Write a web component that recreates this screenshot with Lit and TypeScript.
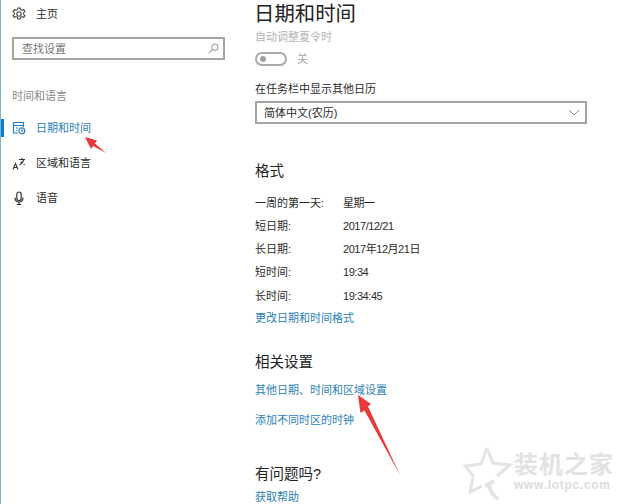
import { LitElement, html, css } from "lit";
import { customElement } from "lit/decorators.js";

const rows = [
  ["一周的第一天:", "星期一"],
  ["短日期:", "2017/12/21"],
  ["长日期:", "2017年12月21日"],
  ["短时间:", "19:34"],
  ["长时间:", "19:34:45"],
];

@customElement("app-root")
export class AppRoot extends LitElement {
  static styles = css`
    :host {
      display: block;
      width: 640px;
      height: 504px;
      overflow: hidden;
      position: relative;
      background: #fff;
      color: #2b2b2b;
      font-family: "Liberation Sans", "Noto Sans CJK SC", sans-serif;
      font-size: 11px;
      line-height: 16px;
    }
    .page { display: flex; height: 504px; }
    .side {
      width: 255px;
      flex: none;
      box-sizing: border-box;
      border-left: 1px solid #7fb6c4;
      padding: 6px 0 0 11px;
    }
    .nav { display: flex; align-items: center; gap: 10px; height: 16px; position: relative; }
    .nav svg { width: 14px; height: 14px; flex: none; display: block; }
    .nav.on { color: #2a7fb8; margin-top: 16px; }
    .nav.on::before {
      content: "";
      position: absolute;
      left: -11px;
      top: -1px;
      width: 3px;
      height: 18px;
      background: #0f78d0;
    }
    .nav.second { margin-top: 19px; }
    .nav.third { margin-top: 19px; }
    .search {
      margin-top: 15px;
      width: 213px;
      height: 23px;
      box-sizing: border-box;
      border: 2px solid #a4a4a4;
      display: flex;
      align-items: center;
      justify-content: space-between;
      padding: 0 4px 0 8px;
      color: #777;
    }
    .search svg { width: 11px; height: 11px; }
    .group { margin-top: 28px; color: #8a8a8a; }
    .main { flex: 1; min-width: 0; padding-top: 1px; margin-left: -1px; }
    h1 { margin: 0; font-size: 20.4px; font-weight: 400; line-height: 26px; color: #222; }
    .dim { color: #b4b4b4; margin-top: 2px; height: 16px; padding-left: 1px; }
    .toggle-row { display: flex; align-items: center; gap: 10px; margin: 6px 0 0 1px; color: #aaa; }
    .toggle {
      width: 32px;
      height: 14px;
      box-sizing: border-box;
      border: 2px solid #a8a8a8;
      border-radius: 7px;
      display: flex;
      align-items: center;
      padding-left: 3px;
    }
    .toggle i { width: 6px; height: 6px; border-radius: 50%; background: #a0a0a0; display: block; }
    .body { padding-left: 1px; }
    .label { margin-top: 14px; }
    .select {
      margin-top: 4px;
      width: 332px;
      height: 23px;
      box-sizing: border-box;
      border: 2px solid #a4a4a4;
      display: flex;
      align-items: center;
      justify-content: space-between;
      padding: 0 5px 0 7px;
    }
    .select svg { width: 12px; height: 7px; }
    h2 { margin: 0; font-size: 14.5px; font-weight: 400; line-height: 20px; color: #222; }
    .fmt { margin-top: 37px; }
    .table { margin-top: 10px; display: grid; grid-template-columns: 88px 1fr; grid-auto-rows: 23.25px; align-items: center; }
    .val { letter-spacing: -0.45px; }
    a { color: #2a7fb8; text-decoration: none; display: block; }
    .change { margin-top: 3px; }
    .rel { margin-top: 26px; }
    .l1 { margin-top: 10px; }
    .l2 { margin-top: 14px; }
    .qa { margin-top: 36px; }
    .help { margin-top: 5px; }
    .mark { position: absolute; pointer-events: none; }
    .arrow1 { left: 80px; top: 132px; width: 30px; height: 26px; }
    .arrow2 { left: 350px; top: 390px; width: 54px; height: 88px; }
    .star { left: 463px; top: 445px; width: 50px; height: 56px; }
    .wm { position: absolute; left: 514px; top: 452px; color: #dcdcdc; pointer-events: none; }
    .wm b { display: block; font-size: 24px; line-height: 26px; letter-spacing: 1px; font-weight: 700; color: #e2e2e2; }
    .wm span { display: block; font-size: 12px; line-height: 14px; font-weight: 700; letter-spacing: 0.7px; }
  `;

  render() {
    return html`
      <div class="page">
        <aside class="side">
          <div class="nav">
            <svg viewBox="0 0 14 14" fill="none" stroke="#444" stroke-width="1.1">
              <circle cx="7" cy="7" r="2.2"></circle>
              <path d="M5.8 1h2.4l.4 1.7 1.5.7 1.6-.9 1.2 2-1.3 1.2v1.6l1.3 1.2-1.2 2-1.6-.9-1.5.7-.4 1.7H5.8l-.4-1.7-1.5-.7-1.6.9-1.2-2 1.3-1.2V5.7L1.1 4.5l1.2-2 1.6.9 1.5-.7z"></path>
            </svg>
            <span>主页</span>
          </div>
          <div class="search">
            <span>查找设置</span>
            <svg viewBox="0 0 12 12" fill="none" stroke="#999" stroke-width="1.1">
              <circle cx="7.5" cy="4.5" r="3.3"></circle>
              <path d="M5 7L1 11"></path>
            </svg>
          </div>
          <div class="group">时间和语言</div>
          <div class="nav on">
            <svg viewBox="0 0 14 14" fill="none" stroke="#2a7fb8" stroke-width="1.2">
              <path d="M6 12H1.5V1.5h10V6"></path>
              <path d="M1.5 4.5h10M4 7h2M4 9.5h1"></path>
              <circle cx="9.8" cy="9.8" r="3"></circle>
              <path d="M9.8 8.3v1.6h1.4"></path>
            </svg>
            <span>日期和时间</span>
          </div>
          <div class="nav second">
            <svg viewBox="0 0 14 14" fill="none" stroke="#333" stroke-width="1.1">
              <path d="M1 13.5L3.5 7.5 6 13.5M1.8 11.5h3.4"></path>
              <path d="M7 3.5h6M10 2v1.5M12 3.5C11 6.5 9.5 8 7.5 9M8.5 5.5c1 1.5 2.5 2.5 4.5 3"></path>
            </svg>
            <span>区域和语言</span>
          </div>
          <div class="nav third">
            <svg viewBox="0 0 14 14" fill="none" stroke="#333" stroke-width="1.2">
              <rect x="4.8" y="1" width="4.4" height="8.5" rx="2.2"></rect>
              <path d="M3 6.5c0 6 8 6 8 0M7 11.5v2M4.8 13.5h4.4"></path>
            </svg>
            <span>语音</span>
          </div>
        </aside>
        <main class="main">
          <h1>日期和时间</h1>
          <div class="dim">自动调整夏令时</div>
          <div class="toggle-row">
            <div class="toggle"><i></i></div>
            <span>关</span>
          </div>
          <div class="body">
            <div class="label">在任务栏中显示其他日历</div>
            <div class="select">
              <span>简体中文(农历)</span>
              <svg viewBox="0 0 12 7" fill="none" stroke="#888" stroke-width="1"><path d="M1 1l5 5 5-5"></path></svg>
            </div>
            <h2 class="fmt">格式</h2>
            <div class="table">
              ${rows.map(([k, v]) => html`<span>${k}</span><span class="val">${v}</span>`)}
            </div>
            <a class="change">更改日期和时间格式</a>
            <h2 class="rel">相关设置</h2>
            <a class="l1">其他日期、时间和区域设置</a>
            <a class="l2">添加不同时区的时钟</a>
            <h2 class="qa">有问题吗?</h2>
            <a class="help">获取帮助</a>
          </div>
        </main>
      </div>
      <svg class="mark arrow1" viewBox="0 0 30 26">
        <path d="M5 5L17 8.5 15 11.5 26 21 13 14 11 17z" fill="#e8393a"></path>
      </svg>
      <svg class="mark arrow2" viewBox="0 0 54 88">
        <path d="M8 5L21 14 18 16.5 50 85 14.5 20.5 10.5 23z" fill="#e8393a"></path>
      </svg>
      <svg class="mark star" viewBox="0 0 50 56" fill="none" stroke="#e4e4e4" stroke-width="3">
        <path d="M24 3L30 18 47 20 34 31M11 32L2 21 18 19 24 3M10 33L7 47 19 41"></path>
        <path d="M22 41L31 36M26 40c1 6 3 10 9 14" stroke-width="4"></path>
      </svg>
      <div class="wm">
        <b>装机之家</b>
        <span>www.lotpc.com</span>
      </div>
    `;
  }
}
